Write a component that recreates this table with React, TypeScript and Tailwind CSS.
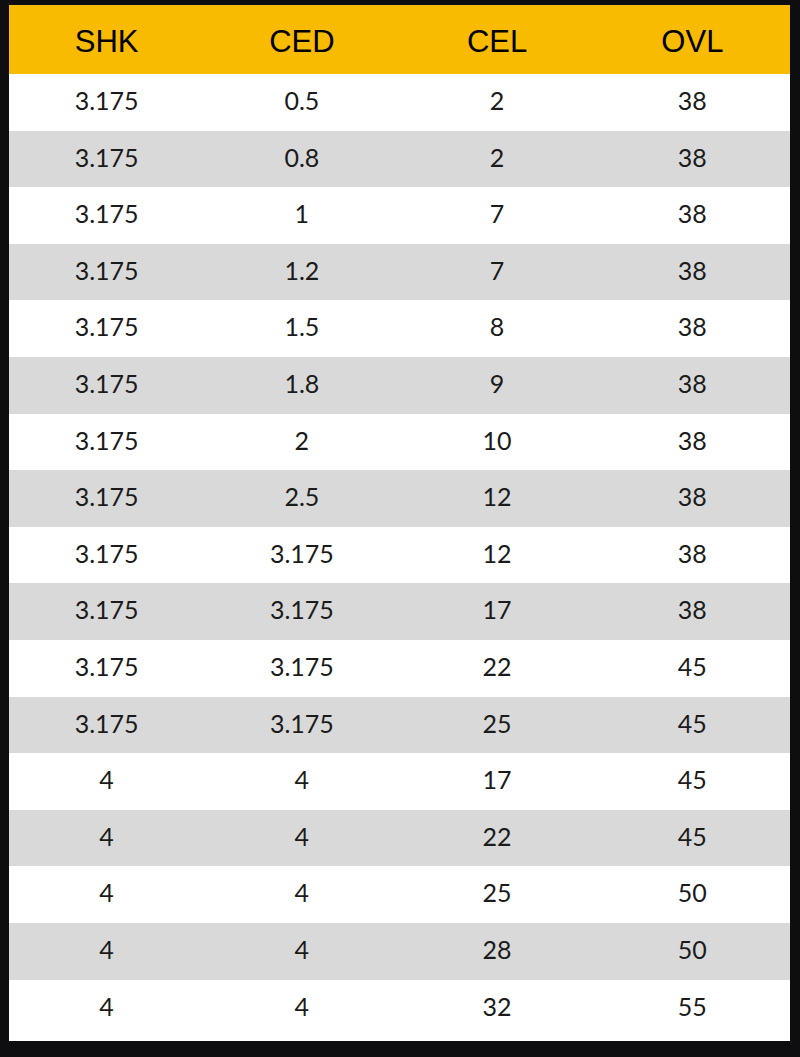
const headers = ["SHK", "CED", "CEL", "OVL"];

const rows: string[][] = [
  ["3.175", "0.5", "2", "38"],
  ["3.175", "0.8", "2", "38"],
  ["3.175", "1", "7", "38"],
  ["3.175", "1.2", "7", "38"],
  ["3.175", "1.5", "8", "38"],
  ["3.175", "1.8", "9", "38"],
  ["3.175", "2", "10", "38"],
  ["3.175", "2.5", "12", "38"],
  ["3.175", "3.175", "12", "38"],
  ["3.175", "3.175", "17", "38"],
  ["3.175", "3.175", "22", "45"],
  ["3.175", "3.175", "25", "45"],
  ["4", "4", "17", "45"],
  ["4", "4", "22", "45"],
  ["4", "4", "25", "50"],
  ["4", "4", "28", "50"],
  ["4", "4", "32", "55"],
];

export default function App() {
  return (
    <div className="h-[1057px] w-[800px] bg-[#0e0e10] pb-[16px] pl-[9px] pr-[10px] pt-[5px]">
      <div className="flex h-full flex-col bg-white">
        <div className="grid h-[69px] grid-cols-4 bg-[#f8bb00] pt-[5px] font-['Liberation_Sans',Arial,sans-serif] text-[31px] text-black">
          {headers.map((h) => (
            <div key={h} className="flex items-center justify-center">
              {h}
            </div>
          ))}
        </div>
        {rows.map((r, i) => (
          <div
            key={i}
            className={`grid grid-cols-4 font-['Lato',sans-serif] text-[25px] text-[#1b1b1b] ${
              i % 2 === 1 ? "bg-[#d9d9d9]" : "bg-white"
            } ${i === rows.length - 1 ? "flex-1 pb-[8px]" : "h-[56.6px] pb-[3px]"}`}
          >
            {r.map((c, j) => (
              <div key={j} className="flex items-center justify-center">
                {c}
              </div>
            ))}
          </div>
        ))}
      </div>
    </div>
  );
}
